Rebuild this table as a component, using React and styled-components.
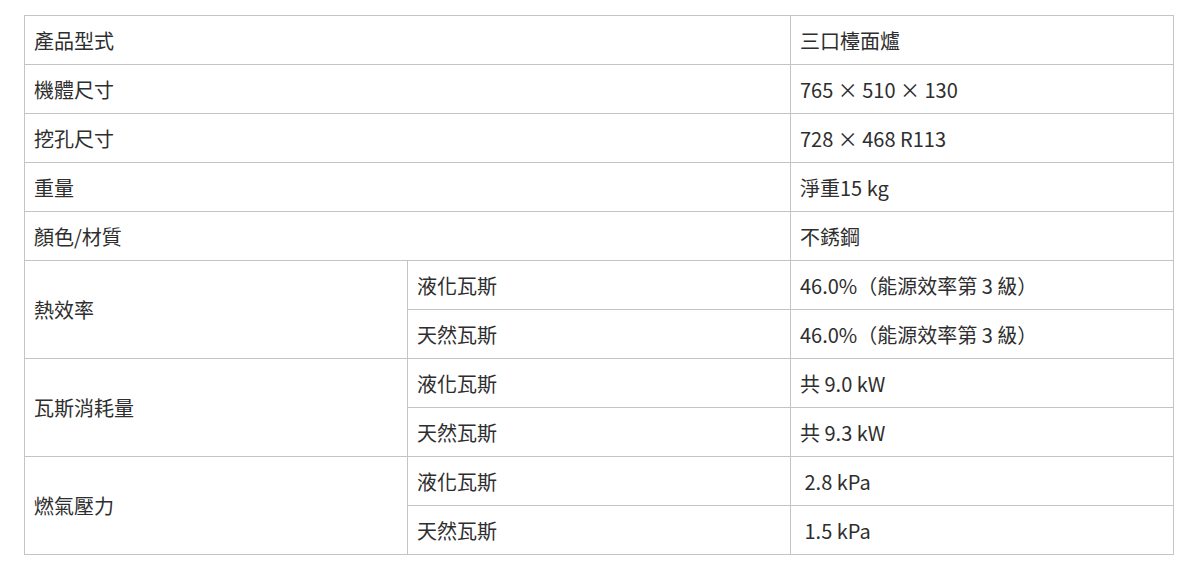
import React from "react"
import styled, { createGlobalStyle } from "styled-components"

const GlobalStyle = createGlobalStyle`
body {
    margin: 0;
    background: #fff;
    font-family: "Noto Sans CJK TC", "Noto Sans", sans-serif;
}
`

const rows = [
    { label: "產品型式", value: "三口檯面爐" },
    { label: "機體尺寸", value: "765 × 510 × 130" },
    { label: "挖孔尺寸", value: "728 × 468 R113" },
    { label: "重量", value: "淨重15 kg" },
    { label: "顏色/材質", value: "不銹鋼" },
]

const groups = [
    {
        label: "熱效率",
        items: [
            { type: "液化瓦斯", value: "46.0%（能源效率第 3 級）" },
            { type: "天然瓦斯", value: "46.0%（能源效率第 3 級）" },
        ],
    },
    {
        label: "瓦斯消耗量",
        items: [
            { type: "液化瓦斯", value: "共 9.0 kW" },
            { type: "天然瓦斯", value: "共 9.3 kW" },
        ],
    },
    {
        label: "燃氣壓力",
        items: [
            { type: "液化瓦斯", value: "\u00a02.8 kPa" },
            { type: "天然瓦斯", value: "\u00a01.5 kPa" },
        ],
    },
]

const App = () => {
    return (
        <Page>
            <GlobalStyle />
            <Table>
                <colgroup>
                    <col style={{ width: "33.333%" }} />
                    <col style={{ width: "33.333%" }} />
                    <col style={{ width: "33.333%" }} />
                </colgroup>
                <tbody>
                    {rows.map((r) => (
                        <tr key={r.label}>
                            <Cell colSpan={2}>{r.label}</Cell>
                            <Cell>{r.value}</Cell>
                        </tr>
                    ))}
                    {groups.map((g) =>
                        g.items.map((it, i) => (
                            <tr key={g.label + it.type}>
                                {i === 0 && <Cell rowSpan={g.items.length}>{g.label}</Cell>}
                                <Cell>{it.type}</Cell>
                                <Cell>{it.value}</Cell>
                            </tr>
                        ))
                    )}
                </tbody>
            </Table>
        </Page>
    )
}
export default App

const Page = styled.div`
padding: 15px 12px 0 24px;
`

const Table = styled.table`
width: 1150px;
border-collapse: collapse;
table-layout: fixed;
border: 1px solid #bdbdbd;
`

const Cell = styled.td`
border: 1px solid #c4c4c4;
height: 49px;
padding: 0 9px;
box-sizing: border-box;
font-size: 20px;
color: #2e2e2e;
vertical-align: middle;
white-space: pre;
`
